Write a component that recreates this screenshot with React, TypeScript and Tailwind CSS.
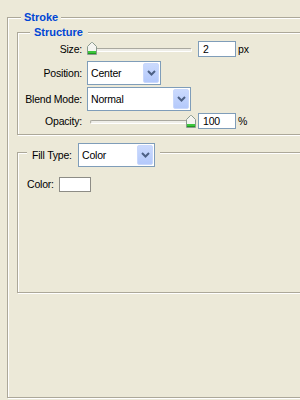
// Photoshop "Stroke" layer style panel, XP look

const etched =
  "border border-[#ACA899] shadow-[inset_1px_1px_0_#fff,1px_1px_0_#fff]";

function Legend({ className, children }: { className: string; children: React.ReactNode }) {
  return (
    <div className={`h-[13px] w-fit bg-[#ECE9D8] text-[11px] font-bold tracking-normal text-[#0046D5] ${className}`}>
      {children}
    </div>
  );
}

function Chevron() {
  return (
    <svg width="9" height="6" viewBox="0 0 9 6">
      <path d="M1 1L4.5 4.5L8 1" fill="none" stroke="#4D6185" strokeWidth="2" />
    </svg>
  );
}

function Select({ value, className }: { value: string; className: string }) {
  return (
    <div className={`flex h-[24px] border border-[#7F9DB9] bg-white p-[1px] ${className}`}>
      <span className="flex flex-1 items-center pl-[2px]">{value}</span>
      <span className="flex h-full w-[16px] items-center justify-center rounded-[2px] border border-[#C9D8FC] bg-gradient-to-b from-[#CBDAFD] to-[#B4C9FB]">
        <Chevron />
      </span>
    </div>
  );
}

function Thumb() {
  return (
    <svg width="10" height="13" viewBox="0 0 10 13">
      <path d="M0.5 12.5V4.5L4.5 0.5H5.5L9.5 4.5V12.5Z" fill="#F4F4F0" stroke="#8A9A8E" />
      <rect x="1" y="9" width="8" height="2" fill="#3DC63D" />
      <rect x="1" y="11" width="8" height="1" fill="#1F9A1F" />
    </svg>
  );
}

function Slider({ pos, thumbTop }: { pos: number; thumbTop: string }) {
  return (
    <div className="relative ml-[5px] flex h-full w-[106px] items-center">
      <div className="ml-[3px] mt-[1px] h-[4px] w-[102px] rounded-full border border-[#A9A89F] border-b-white border-r-white bg-[#EFEEE8]" />
      <div className={`absolute ${thumbTop}`} style={{ left: pos }}>
        <Thumb />
      </div>
    </div>
  );
}

function NumberBox({ value }: { value: string }) {
  return (
    <div className="ml-[5px] flex h-[16px] w-[38px] items-center border border-[#7F9DB9] bg-white pl-[4px]">
      {value}
    </div>
  );
}

function Label({ children }: { children: React.ReactNode }) {
  return <span className="w-[64px] shrink-0 text-right">{children}</span>;
}

export default function App() {
  return (
    <div className="h-[400px] w-[300px] overflow-hidden bg-[#ECE9D8] pl-[7px] pt-[17px] font-['Tahoma','Liberation_Sans',sans-serif] text-[10.5px] leading-[13px] tracking-[-0.2px] text-black">
      <div className={`h-[381px] w-[340px] ${etched}`}>
        <Legend className="-mt-[7px] ml-[13px] px-[3px]">Stroke</Legend>

        {/* Structure */}
        <div className={`ml-[9px] mt-[8px] h-[103px] w-[320px] ${etched}`}>
          <Legend className="-mt-[7px] ml-[12px] pl-[4px] pr-[5px]">Structure</Legend>

          <div className="mt-[2px] flex flex-col">
            <div className="flex h-[16px] items-center">
              <Label>Size:</Label>
              <Slider pos={0} thumbTop="top-[1px]" />
              <NumberBox value="2" />
              <span className="ml-[2px]">px</span>
            </div>

            <div className="mt-[4px] flex items-center">
              <Label>Position:</Label>
              <Select value="Center" className="ml-[5px] w-[74px]" />
            </div>

            <div className="mt-[2px] flex items-center">
              <Label>Blend Mode:</Label>
              <Select value="Normal" className="ml-[5px] w-[104px]" />
            </div>

            <div className="mt-[2px] flex h-[16px] items-center">
              <Label>Opacity:</Label>
              <Slider pos={99} thumbTop="top-[2px]" />
              <NumberBox value="100" />
              <span className="ml-[2px]">%</span>
            </div>
          </div>
        </div>

        {/* Fill Type */}
        <div className={`ml-[9px] mt-[17px] h-[141px] w-[320px] ${etched}`}>
          <div className="-mt-[10px] ml-[9px] flex h-[24px] w-fit items-center bg-[#ECE9D8] px-[5px]">
            <span className="w-[46px]">Fill Type:</span>
            <Select value="Color" className="w-[77px]" />
          </div>

          <div className="mt-[10px] flex items-center pl-[9px]">
            <span className="w-[32px]">Color:</span>
            <div className="h-[15px] w-[32px] border border-[#8D8C86] bg-white" />
          </div>
        </div>
      </div>
    </div>
  );
}
